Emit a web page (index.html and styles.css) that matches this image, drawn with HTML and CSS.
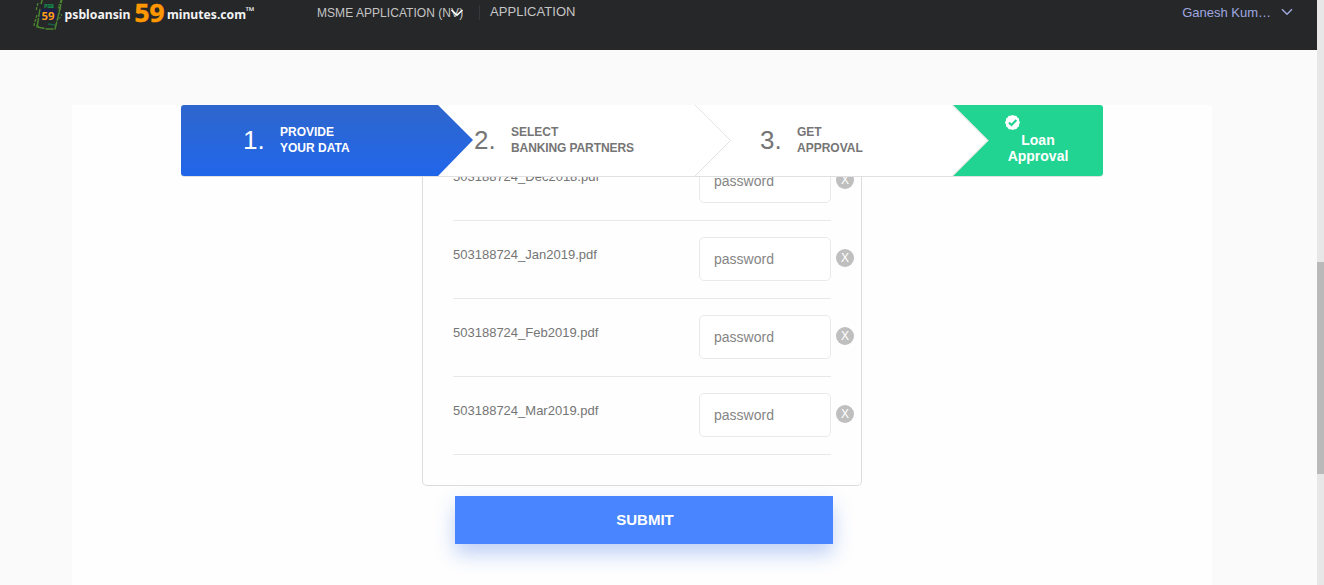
FILE: index.html
```
<!DOCTYPE html>
<html lang="en">
<head>
<meta charset="utf-8">
<title>psbloansin59minutes.com</title>
<link rel="stylesheet" href="styles.css">
</head>
<body>
<div class="app">
  <header class="topbar">
    <svg class="logo" width="232" height="32" viewBox="0 0 232 32" aria-label="psbloansin 59 minutes.com">
      <g fill="none" stroke="#4b8630">
        <path d="M6 3L4 11M5 15L2 25l6 2" stroke-width="1.300" stroke-dasharray="3 1.200"/>
        <path d="M10.500 -1L9 4M8 9L5 27l10 2h8l3-12 4-18" stroke-width="1.500" stroke-dasharray="8 1"/>
        <path d="M29 0l-3 8 3-1-2 6 3 2-4 5" stroke-width="1" stroke-dasharray="3 1"/>
      </g>
      <path d="M9 9h16l-1 11H8z" fill="#1a204a"/>
      <text class="logo-psb" x="12" y="8" textLength="10">PSB</text>
      <text class="logo-note" x="9.500" y="20" textLength="13" lengthAdjust="spacingAndGlyphs">59</text>
      <path d="M16 24l7 1" stroke="#176044" stroke-width="1.500"/>
      <text class="logo-name" x="32.500" y="19" textLength="66" lengthAdjust="spacingAndGlyphs">psbloansin</text>
      <text class="logo-big" x="102.500" y="21.500" textLength="30" lengthAdjust="spacingAndGlyphs">59</text>
      <text class="logo-name" x="135" y="19" textLength="79" lengthAdjust="spacingAndGlyphs">minutes.com</text>
      <text class="logo-tm" x="213.500" y="14.500" textLength="9" lengthAdjust="spacingAndGlyphs">™</text>
    </svg>
    <nav class="nav">
      <span class="nav-select">MSME APPLICATION (NV)
        <svg class="nav-chevron" width="14" height="8" viewBox="0 0 14 8"><path d="M1.500 1L7 6.200 12.500 1" fill="none" stroke="#fff" stroke-width="1.600"/></svg>
      </span>
      <span class="nav-link">APPLICATION</span>
    </nav>
    <div class="user">Ganesh Kum…
      <svg width="12" height="8" viewBox="0 0 12 8"><path d="M1 1.300L6 6.200 11 1.300" fill="none" stroke="#9fa8da" stroke-width="1.500"/></svg>
    </div>
  </header>
  <main class="page">
    <div class="content">
      <div class="steps">
        <svg class="steps-shape" width="922" height="71" viewBox="0 0 922 71">
          <defs><linearGradient id="active" x1="0" y1="0" x2="0" y2="1"><stop offset="0" stop-color="#2e66cc"/><stop offset="1" stop-color="#2166ea"/></linearGradient></defs>
          <path d="M3 0H257L292 35 257 71H3Q0 71 0 68V3Q0 0 3 0z" fill="url(#active)"/>
          <path d="M514 0l35.500 35.500L514 71" fill="none" stroke="#e3e3e3"/>
          <path d="M772 0H919Q922 0 922 3V68Q922 71 919 71H772L807.500 35.500z" fill="#21d491"/>
          <path d="M771.500 0l35.500 35.500L771.500 71" fill="none" stroke="#d9ded9"/>
        </svg>
        <div class="step step-one"><span class="num">1.</span><span>PROVIDE<br>YOUR DATA</span></div>
        <div class="step step-two"><span class="num">2.</span><span>SELECT<br><span class="tight">BANKING PARTNERS</span></span></div>
        <div class="step step-three"><span class="num">3.</span><span>GET<br>APPROVAL</span></div>
        <div class="step-final">
          <svg width="15" height="15" viewBox="0 0 14 14"><path d="M7 0l1.700.7 1.800.1 1 1.500 1.500 1 .1 1.800L14 7l-.9 1.800-.1 1.900-1.500 1-1 1.500-1.800.1L7 14l-1.700-.7-1.800-.1-1-1.500-1.500-1-.1-1.900L0 7l.9-1.900L1 3.300l1.500-1 1-1.500L5.300.7z" fill="#fff"/><path d="M3.700 6.900l2.400 2.400 4.500-4.600" fill="none" stroke="#21d491" stroke-width="2"/></svg>
          <span>Loan<br>Approval</span>
        </div>
      </div>
      <section class="panel">
        <div class="row row-cut"><span class="file">503188724_Dec2018.pdf</span><input class="password" type="text" placeholder="password"><button class="remove">X</button></div>
        <div class="row"><span class="file">503188724_Jan2019.pdf</span><input class="password" type="text" placeholder="password"><button class="remove">X</button></div>
        <div class="row"><span class="file">503188724_Feb2019.pdf</span><input class="password" type="text" placeholder="password"><button class="remove">X</button></div>
        <div class="row"><span class="file">503188724_Mar2019.pdf</span><input class="password" type="text" placeholder="password"><button class="remove">X</button></div>
      </section>
      <button class="submit">SUBMIT</button>
    </div>
  </main>
</div>
<div class="scrollbar"><div class="thumb"></div></div>
</body>
</html>
```
FILE: styles.css
```
* { box-sizing: border-box; }
body {
  margin: 0;
  height: 585px;
  display: grid;
  grid-template-columns: 1fr 7px;
  overflow: hidden;
  font-family: "Liberation Sans", Arial, sans-serif;
  color: #757575;
}
button, input { font-family: inherit; }
.app { height: 585px; overflow: hidden; background: #fafafa; }
.topbar { display: flex; height: 50px; padding-left: 32px; background: #262729; }
.logo { display: block; overflow: hidden; }
.logo text { font-family: "Noto Sans", "Open Sans", sans-serif; font-weight: 700; }
.logo .logo-psb { fill: #129353; font-size: 6px; }
.logo .logo-note { fill: #ff9c10; font-size: 11px; }
.logo .logo-name { fill: #f3f3f3; font-size: 12.5px; }
.logo .logo-big { fill: #ff9800; stroke: #ff9800; stroke-width: .5px; font-size: 25px; }
.logo .logo-tm { fill: #f3f3f3; font-size: 11px; }
.nav { display: flex; padding: 5px 0 0 53px; color: #c5c5c5; }
.nav-select { position: relative; width: 163px; height: 15px; font-size: 12px; line-height: 16px; letter-spacing: .05px; border-right: 1px solid #35373a; }
.nav-chevron { position: absolute; left: 133px; top: 4px; }
.nav-link { padding-left: 10px; font-size: 13px; line-height: 14px; letter-spacing: .05px; }
.user { display: flex; align-items: center; gap: 10px; height: 16px; margin: 4px 24px 0 auto; font-size: 13px; color: #9fa8e0; }
.page { padding: 55px 105px 0 72px; }
.content { height: 480px; background: #fefefe; }
.steps { position: relative; display: flex; width: 922px; height: 72px; margin-left: 109px; background: #fff; border-bottom: 1px solid #e0e0e0; border-radius: 4px; }
.steps-shape { position: absolute; left: 0; top: 0; }
.step { position: relative; display: flex; align-items: center; height: 70px; font-size: 12px; font-weight: 700; line-height: 16px; }
.num { width: 37px; font-size: 26px; font-weight: 400; }
.tight { letter-spacing: -.1px; }
.step-one { width: 292px; padding-left: 62px; color: #fff; }
.step-two { width: 286px; padding-left: 1px; }
.step-three { width: 229px; padding-left: 1px; }
.step-final { position: relative; width: 115px; padding: 10px 0 0 17px; color: #fff; font-size: 14px; font-weight: 700; line-height: 16px; }
.step-final svg { display: block; margin: 0 0 2px; }
.step-final span { display: block; width: 66px; text-align: center; }
.panel { width: 440px; height: 309px; margin-left: 350px; padding: 0 30px; overflow: hidden; border: 1px solid #dcdcdc; border-top: 0; border-radius: 0 0 5px 5px; }
.row { display: flex; align-items: flex-start; width: 401px; height: 78px; padding-top: 16px; background: linear-gradient(#e8e8e8, #e8e8e8) left bottom / 378px 1px no-repeat; }
.row-cut { margin-top: -34px; }
.file { width: 246px; padding-top: 10px; font-size: 13px; line-height: 15px; }
.password { width: 132px; height: 44px; padding: 0 14px; border: 1px solid #e9e9e9; border-radius: 5px; background: #fff; font-size: 14px; }
.password::placeholder { color: #858585; opacity: 1; }
.remove { width: 18px; height: 18px; margin: 12px 0 0 5px; padding: 0; border: 0; border-radius: 50%; background: #bfbfbf; color: #fff; font-size: 12px; line-height: 18px; }
.submit { display: block; width: 378px; height: 48px; margin: 10px 0 0 383px; padding: 0 0 2px 2px; border: 0; background: #4885ff; color: #fff; font-size: 15px; font-weight: 700; box-shadow: 0 10px 20px rgba(44, 104, 228, .3); }
.scrollbar { height: 585px; padding-top: 262px; background: #e7e7e7; }
.thumb { height: 212px; background: #b9b9b9; }
```
